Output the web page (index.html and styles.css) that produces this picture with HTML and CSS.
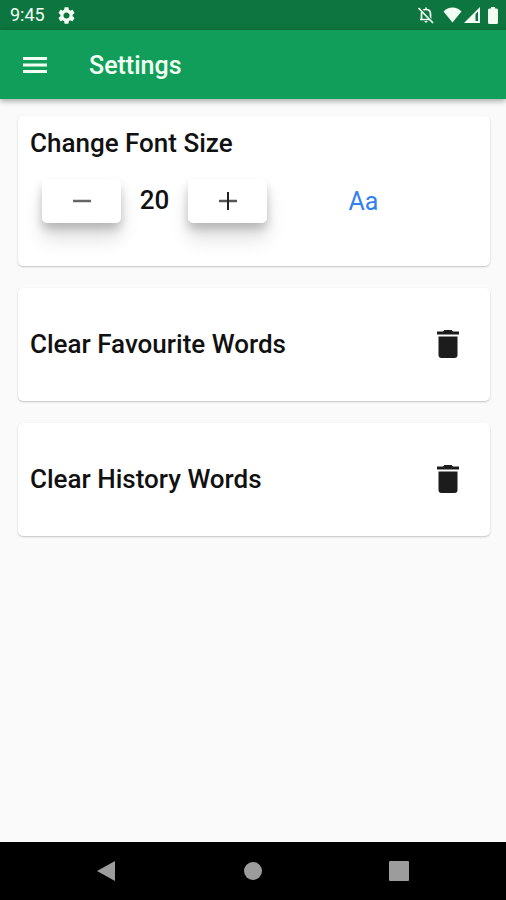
FILE: index.html
```html
<!DOCTYPE html>
<html lang="en">
  <head>
    <meta charset="UTF-8" />
    <meta name="viewport" content="width=device-width, initial-scale=1.0" />
    <title>Settings</title>
    <link rel="stylesheet" href="styles.css">
  </head>
  <body>
    <div class="status-bar">
      <span class="clock">9:45</span>
      <svg class="status-gear" width="17" height="17" viewBox="2 2 20 20" fill="currentColor" aria-hidden="true">
        <path d="M19.14 12.94c.04-.3.06-.61.06-.94 0-.32-.02-.64-.07-.94l2.03-1.58a.49.49 0 0 0 .12-.61l-1.92-3.32a.488.488 0 0 0-.59-.22l-2.39.96c-.5-.38-1.03-.7-1.62-.94l-.36-2.54a.484.484 0 0 0-.48-.41h-3.84c-.24 0-.43.17-.47.41l-.36 2.54c-.59.24-1.13.57-1.62.94l-2.39-.96c-.22-.08-.47 0-.59.22L2.74 8.87c-.12.21-.08.47.12.61l2.03 1.58c-.05.3-.09.63-.09.94s.02.64.07.94l-2.03 1.58a.49.49 0 0 0-.12.61l1.92 3.32c.12.22.37.29.59.22l2.39-.96c.5.38 1.03.7 1.62.94l.36 2.54c.05.24.24.41.48.41h3.84c.24 0 .44-.17.47-.41l.36-2.54c.59-.24 1.13-.56 1.62-.94l2.39.96c.22.08.47 0 .59-.22l1.92-3.32c.12-.22.07-.47-.12-.61l-2.01-1.58zM12 15.6c-1.98 0-3.6-1.62-3.6-3.6s1.62-3.6 3.6-3.6 3.6 1.62 3.6 3.6-1.62 3.6-3.6 3.6z" />
      </svg>
      <div class="status-icons">
        <svg width="18" height="18" viewBox="0 0 18 18" fill="none" stroke="currentColor" aria-hidden="true">
          <path d="M4.5 13.5V8c0-2.5 1.5-4.5 4.5-4.5s4.5 2 4.5 4.5v5.5M3 13.5h12M9 1.5v2" stroke-width="1.7" />
          <path d="M7.5 15h3c0 2-3 2-3 0z" fill="currentColor" stroke="none" />
          <path d="M2.5 1.5l14 15" stroke="#0d753f" stroke-width="2" />
          <path d="M1.5 2l14.5 15" stroke-width="1.7" />
        </svg>
        <svg class="wifi" width="19" height="16" viewBox="0 0 19 16" fill="currentColor" aria-hidden="true">
          <path d="M9.5 15.5L.5 4.5C3 2 6 .5 9.5 .5s6.500 1.5 9 4z" />
        </svg>
        <svg width="16" height="16" viewBox="0 0 16 16" fill="currentColor" aria-hidden="true">
          <path d="M0 16L16 0v16z" />
          <path d="M11.5 7L14 4.5V14h-2.5z" fill="#0d753f" />
        </svg>
        <svg class="battery" width="10" height="17" viewBox="0 0 10 17" fill="currentColor" aria-hidden="true">
          <path d="M3 0h4v1.5h1.5Q10 1.5 10 3v12.5Q10 17 8.5 17h-7Q0 17 0 15.5V3q0-1.5 1.5-1.5H3z" />
        </svg>
      </div>
    </div>

    <header class="app-bar">
      <button class="menu-button" aria-label="Menu">
        <svg width="24" height="16" viewBox="0 0 24 16" fill="currentColor" aria-hidden="true">
          <path d="M0 0h24v3H0zM0 6.5h24v3H0zM0 13h24v3H0z" />
        </svg>
      </button>
      <h1>Settings</h1>
    </header>

    <main class="settings">
      <section class="card font-card">
        <h2>Change Font Size</h2>
        <div class="font-row">
          <button class="step-button" id="minusButton" aria-label="Smaller">
            <svg width="20" height="20" viewBox="0 0 20 20" aria-hidden="true">
              <path d="M1 10h18" stroke="#666" stroke-width="2.5" />
            </svg>
          </button>
          <span class="font-size" id="fontSize">20</span>
          <button class="step-button" id="plusButton" aria-label="Larger">
            <svg width="20" height="20" viewBox="0 0 20 20" aria-hidden="true">
              <path d="M1 10h18" stroke="#555" stroke-width="2.5" />
              <path d="M10 1v18" stroke="#222" stroke-width="2" />
            </svg>
          </button>
          <span class="sample">Aa</span>
        </div>
      </section>

      <section class="card clear-card">
        <h2>Clear Favourite Words</h2>
        <button class="delete-button" aria-label="Clear favourite words">
          <svg width="22" height="28" viewBox="0 0 22 28" fill="currentColor" aria-hidden="true">
            <path d="M0 1.5h6L7.5 0h7L16 1.5h6v3H0zM1.5 6.5h19V25q0 3-3 3h-13q-3 0-3-3z" />
          </svg>
        </button>
      </section>

      <section class="card clear-card">
        <h2>Clear History Words</h2>
        <button class="delete-button" aria-label="Clear history words">
          <svg width="22" height="28" viewBox="0 0 22 28" fill="currentColor" aria-hidden="true">
            <path d="M0 1.5h6L7.5 0h7L16 1.5h6v3H0zM1.5 6.5h19V25q0 3-3 3h-13q-3 0-3-3z" />
          </svg>
        </button>
      </section>
    </main>

    <nav class="nav-bar">
      <button aria-label="Back">
        <svg width="20" height="22" viewBox="0 0 20 22" fill="currentColor" aria-hidden="true">
          <path d="M19 1v20L1 11z" />
        </svg>
      </button>
      <button aria-label="Home">
        <svg width="20" height="20" viewBox="0 0 20 20" fill="currentColor" aria-hidden="true">
          <circle cx="10" cy="10" r="9" />
        </svg>
      </button>
      <button aria-label="Recent apps">
        <svg width="20" height="20" viewBox="0 0 20 20" fill="currentColor" aria-hidden="true">
          <rect width="20" height="20" rx="1" />
        </svg>
      </button>
    </nav>

    <script>
      const fontSize = document.getElementById("fontSize");

      function changeSize(step) {
        fontSize.innerText = Number(fontSize.innerText) + step;
      }

      document
        .getElementById("minusButton")
        .addEventListener("click", () => changeSize(-1));
      document
        .getElementById("plusButton")
        .addEventListener("click", () => changeSize(1));
    </script>
  </body>
</html>
```
FILE: styles.css
```css
* {
  box-sizing: border-box;
}

body {
  margin: 0;
  min-height: 100vh;
  display: flex;
  flex-direction: column;
  font-family: Roboto, sans-serif;
  background: #fafafa;
  color: #111;
}

h1,
h2 {
  margin: 0;
  font-weight: 500;
}

button {
  display: flex;
  align-items: center;
  justify-content: center;
  padding: 0;
  border: none;
  background: none;
  color: inherit;
  cursor: pointer;
}

svg {
  display: block;
}

.status-bar {
  display: flex;
  align-items: center;
  height: 30px;
  padding: 0 8px 0 10px;
  background: #0d753f;
  color: #f4fff4;
}

.clock {
  font-size: 18px;
  line-height: 32px;
}

.status-gear {
  margin-left: 13px;
}

.status-icons {
  display: flex;
  align-items: center;
  margin-left: auto;
}

.wifi {
  margin-left: 8px;
  margin-right: 2px;
}

.battery {
  margin-left: 8px;
}

.app-bar {
  display: flex;
  align-items: center;
  gap: 31px;
  height: 69px;
  padding: 0 12px;
  background: #119e5a;
  color: #f4fff4;
  box-shadow: 0 2px 6px rgba(0, 0, 0, 0.35);
}

.menu-button {
  width: 46px;
  height: 48px;
}

.app-bar h1 {
  padding-top: 2px;
  font-size: 25px;
  line-height: 32px;
}

.settings {
  flex: 1;
  display: flex;
  flex-direction: column;
  gap: 22px;
  padding: 17px 16px 17px 18px;
}

.card {
  background: white;
  border-radius: 5px;
  box-shadow: 0 1px 2px rgba(0, 0, 0, 0.22);
}

.card h2 {
  font-size: 26px;
  line-height: 32px;
}

.font-card {
  padding: 11px 30px 41px 12px;
}

.font-row {
  display: flex;
  align-items: flex-start;
  padding: 20px 0 0 12px;
}

.step-button {
  width: 79px;
  height: 44px;
  border-radius: 5px;
  background: white;
  box-shadow: 0 16px 20px rgba(0, 0, 0, 0.12), 0 6px 10px rgba(0, 0, 0, 0.2);
}

.font-size {
  width: 67px;
  font-size: 26px;
  font-weight: 500;
  line-height: 42px;
  text-align: center;
}

.sample {
  flex: 1;
  font-size: 25px;
  line-height: 46px;
  text-align: center;
  color: #3080f0;
}

.clear-card {
  display: flex;
  align-items: center;
  justify-content: space-between;
  padding: 32px 18px 33px 12px;
}

.delete-button {
  width: 48px;
  height: 48px;
  color: #1c1c1c;
}

.nav-bar {
  display: flex;
  align-items: center;
  justify-content: space-between;
  height: 58px;
  padding: 0 83px 0 82px;
  background: black;
  color: #9c9c9c;
}

.nav-bar button {
  width: 48px;
  height: 48px;
}
```
